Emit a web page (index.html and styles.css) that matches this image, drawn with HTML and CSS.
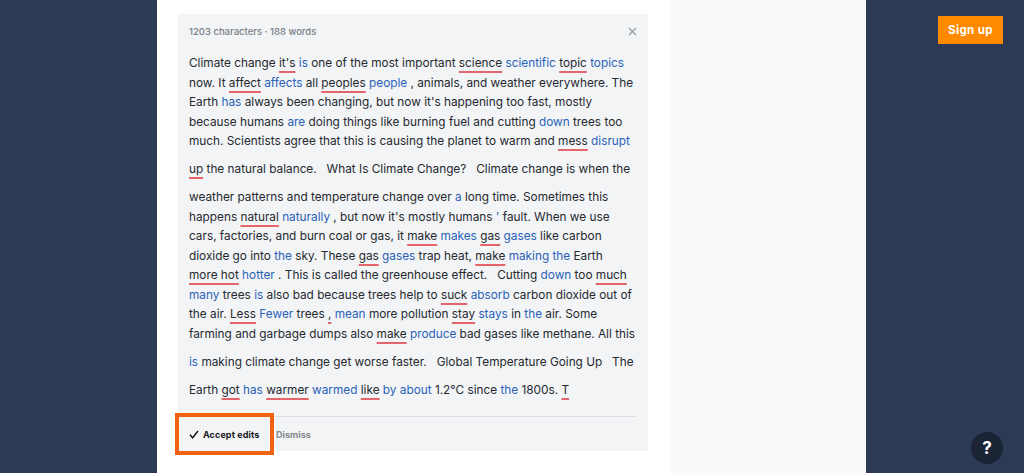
FILE: index.html
```html
<!DOCTYPE html>
<html lang="en">
<head>
  <meta charset="UTF-8" />
  <meta name="viewport" content="width=device-width, initial-scale=1" />
  <title>Grammar check</title>
  <link rel="stylesheet" href="styles.css">
</head>
<body>
  <div class="side-left"></div>
  <main class="main-col">
    <section class="panel">
      <div class="panel-head">
        <span class="count">1203 characters · 188 words</span>
        <svg class="close-icon" width="9" height="9" viewBox="0 0 9 9"><path d="M1 1l7 7M8 1L1 8" stroke="#9a9ea5" stroke-width="1.3" fill="none"/></svg>
      </div>
      <div class="edit-text">
        <div class="line">Climate change <del>it's</del> <ins>is</ins> one of the most important <del>science</del> <ins>scientific</ins> <del>topic</del> <ins>topics</ins></div>
        <div class="line">now. It <del>affect</del> <ins>affects</ins> all <del>peoples</del> <ins>people</ins> , animals, and weather everywhere. The</div>
        <div class="line">Earth <ins>has</ins> always been changing, but now it's happening too fast, mostly</div>
        <div class="line">because humans <ins>are</ins> doing things like burning fuel and cutting <ins>down</ins> trees too</div>
        <div class="line">much. Scientists agree that this is causing the planet to warm and <del>mess</del> <ins>disrupt</ins></div>
        <div class="line tall"><del>up</del> the natural balance. &nbsp; What Is Climate Change? &nbsp; Climate change is when the</div>
        <div class="line tall">weather patterns and temperature change over <ins>a</ins> long time. Sometimes this</div>
        <div class="line">happens <del>natural</del> <ins>naturally</ins> , but now it's mostly humans <ins>'</ins> fault. When we use</div>
        <div class="line">cars, factories, and burn coal or gas, it <del>make</del> <ins>makes</ins> <del>gas</del> <ins>gases</ins> like carbon</div>
        <div class="line">dioxide go into <ins>the</ins> sky. These <del>gas</del> <ins>gases</ins> trap heat, <del>make</del> <ins>making the</ins> Earth</div>
        <div class="line"><del>more hot</del> <ins>hotter</ins> . This is called the greenhouse effect. &nbsp; Cutting <ins>down</ins> too <del>much</del></div>
        <div class="line"><ins>many</ins> trees <ins>is</ins> also bad because trees help to <del>suck</del> <ins>absorb</ins> carbon dioxide out of</div>
        <div class="line">the air. <del>Less</del> <ins>Fewer</ins> trees <del>,</del> <ins>mean</ins> more pollution <del>stay</del> <ins>stays</ins> in <ins>the</ins> air. Some</div>
        <div class="line">farming and garbage dumps also <del>make</del> <ins>produce</ins> bad gases like methane. All this</div>
        <div class="line tall"><ins>is</ins> making climate change get worse faster. &nbsp; Global Temperature Going Up &nbsp; The</div>
        <div class="line tall">Earth <del>got</del> <ins>has</ins> <del>warmer</del> <ins>warmed</ins> <del>like</del> <ins>by about</ins> 1.2°C since <ins>the</ins> 1800s. <del>T</del></div>
      </div>
      <div class="panel-foot">
        <button class="btn-accept">
          <svg width="10" height="9" viewBox="0 0 10 9"><path d="M1 4.8l2.6 3L9 1" stroke="#111" stroke-width="1.4" fill="none"/></svg>
          Accept edits
        </button>
        <button class="btn-dismiss">Dismiss</button>
      </div>
    </section>
  </main>
  <div class="side-col"></div>
  <div class="side-right">
    <button class="signup">Sign up</button>
  </div>
  <button class="help">?</button>
</body>
</html>
```

FILE: styles.css
```css
html, body {
  margin: 0;
  padding: 0;
  height: 100%;
  overflow: hidden;
}
body {
  display: flex;
  background: #2c3a56;
  font-family: Inter, 'Liberation Sans', sans-serif;
  color: #26292e;
}
.side-left {
  width: 157px;
  flex-shrink: 0;
}
.main-col {
  width: 512px;
  flex-shrink: 0;
  background: #fff;
  padding: 14px 21px 0 21px;
  box-sizing: border-box;
}
.side-col {
  width: 197px;
  flex-shrink: 0;
  background: #fafafb;
}
.side-right {
  flex: 1;
  display: flex;
  justify-content: flex-end;
  align-items: flex-start;
  padding: 16px 21px 0 0;
}
.panel {
  background: #f2f4f6;
  height: 437px;
  display: flex;
  flex-direction: column;
  padding: 0 11px;
}
.panel-head {
  display: flex;
  justify-content: space-between;
  align-items: center;
  height: 35px;
  font-size: 9.5px;
  color: #7a7e85;
  font-weight: 500;
}
.edit-text {
  margin-top: 5px;
  font-size: 11.8px;
  line-height: 19.5px;
}
.line {
  white-space: nowrap;
}
.line.tall {
  margin-top: 8.5px;
}
.edit-text del {
  text-decoration: underline #e2666c 2px;
  text-underline-offset: 3.5px;
  text-decoration-skip-ink: none;
}
.edit-text ins {
  text-decoration: none;
  color: #2a62b8;
}
.panel-foot {
  margin-top: auto;
  border-top: 1px solid #dcdee2;
  display: flex;
  align-items: center;
  height: 34px;
}
.panel-foot button {
  background: none;
  border: none;
  font-family: inherit;
  font-size: 9px;
  font-weight: 700;
  padding: 0;
  cursor: pointer;
}
.btn-accept {
  display: flex;
  align-items: center;
  gap: 4px;
  color: #16181c;
  height: 36px;
  width: 93px;
  flex-shrink: 0;
  box-sizing: border-box;
  padding-left: 11px !important;
  margin-left: -11px;
  letter-spacing: 0.1px;
  outline: 4px solid #f0620f;
  outline-offset: -1px;
}
.btn-dismiss {
  margin-left: 5px;
  color: #85888e;
}
.signup {
  width: 65px;
  height: 28px;
  background: #ff8a00;
  border: none;
  color: #fff;
  font-family: Inter, 'Liberation Sans', sans-serif;
  font-size: 11.5px;
  font-weight: 700;
  letter-spacing: 0.4px;
  padding: 0;
  cursor: pointer;
}
.help {
  position: fixed;
  right: 21px;
  bottom: 9px;
  width: 32px;
  height: 32px;
  border-radius: 50%;
  border: none;
  background: #1b2435;
  color: #fff;
  font-family: Inter, 'Liberation Sans', sans-serif;
  font-size: 17px;
  font-weight: 700;
  padding: 0;
}
```
